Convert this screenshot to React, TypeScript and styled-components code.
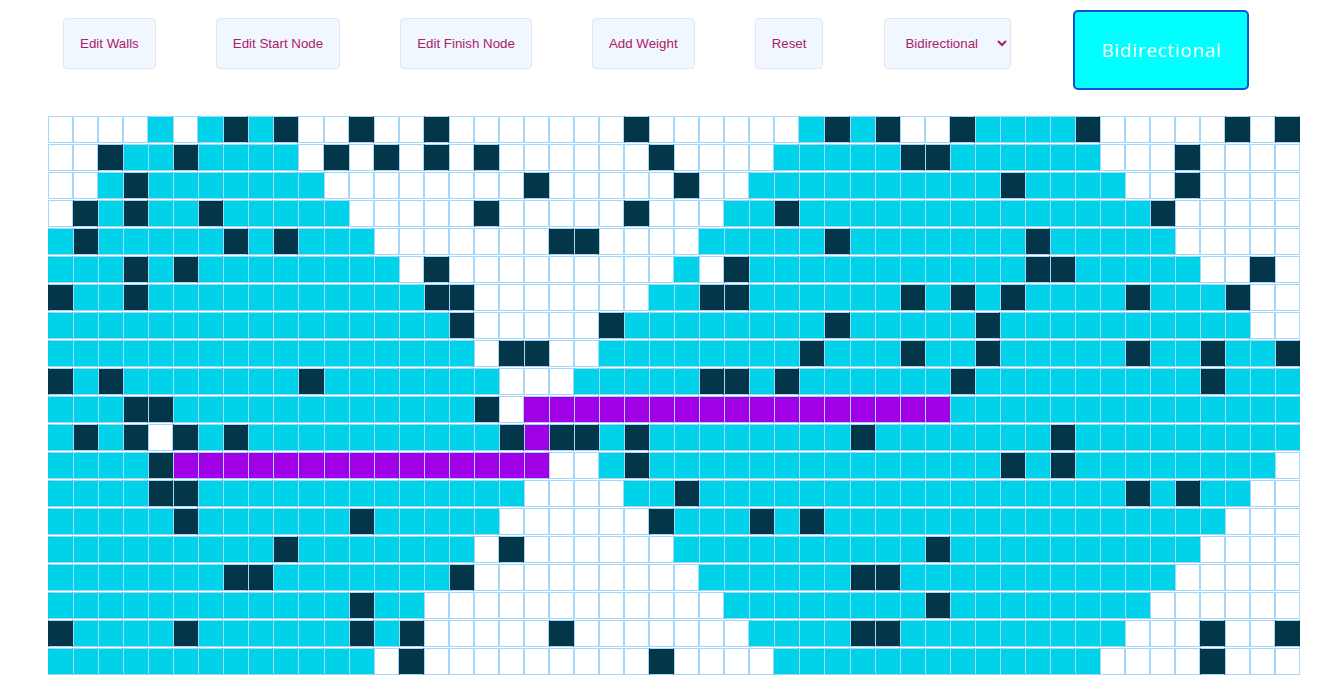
import styled, { createGlobalStyle } from 'styled-components'

const GlobalStyle = createGlobalStyle`
  html, body {
    margin: 0;
    padding: 0;
    background: #fff;
    font-family: "Liberation Sans", Arial, sans-serif;
  }
`

const Toolbar = styled.div`
  display: flex;
  align-items: flex-start;
  gap: 60px;
  padding: 10px 0 0 63px;
  height: 116px;
  box-sizing: border-box;
`

const ToolButton = styled.button`
  height: 51px;
  margin-top: 8px;
  padding: 0 16px;
  background: #f0f7ff;
  border: 1px solid #dfe6ed;
  border-radius: 4px;
  color: #ab2168;
  font-family: "Liberation Sans", Arial, sans-serif;
  font-size: 13.333px;
`

const AlgoSelect = styled.select`
  width: 127px;
  height: 51px;
  margin: 8px 2px 0 1px;
  padding: 0 0 0 16px;
  background: #f0f7ff;
  border: 1px solid #dfe6ed;
  border-radius: 4px;
  color: #ab2168;
  font-family: "Liberation Sans", Arial, sans-serif;
  font-size: 13.333px;
`

const VisualizeButton = styled.button`
  width: 176px;
  height: 80px;
  padding: 0;
  background: #00ffff;
  border: 2px solid #0b50d6;
  border-radius: 5px;
  color: #fff;
  font-family: "Open Sans", sans-serif;
  font-size: 19px;
  letter-spacing: 0.7px;
`

const Board = styled.div`
  width: 1252px;
  margin-left: 48px;
  display: flex;
  flex-direction: column;
  gap: 1px;
`

const BoardRow = styled.div`
  display: flex;
  height: 27px;
`

type CellKind = 'w' | 'c' | 'd' | 'p'

const cellColors: Record<CellKind, string> = {
  w: '#ffffff',
  c: '#00d2ea',
  d: '#023648',
  p: '#a000e6',
}

const lineColor = '#a3d7fb'

// filled cells run under their side borders, so only white next to white shows a double line
const Cell = styled.div<{ $kind: CellKind; $joined: boolean }>`
  flex: 1;
  box-sizing: border-box;
  border: 1px solid ${lineColor};
  border-left-color: ${(p) => (p.$kind === 'w' || p.$joined ? lineColor : 'transparent')};
  border-right-color: ${(p) => (p.$kind === 'w' ? lineColor : 'transparent')};
  background: ${(p) => cellColors[p.$kind]};
  background-clip: border-box;
`

// w = empty, c = visited, d = wall, p = path
const rows = [
  'wwwwcwcdcdwwdwwdw wwwwwwdwwwwwwcdcd wwdccccdwwwwwdwd',
  'wwdccdccccwdwdwdw dwwwwwwdwwwwccccc ddccccccwwwdwwww',
  'wwcdcccccccwwwwww wwdwwwwwdwwcccccc ccccdccccwwdwwww',
  'wdcdccdcccccwwwww dwwwwwdwwwccdcccc ccccccccccdwwwww',
  'cdcccccdcdcccwwww wwwddwwwwcccccdcc cccccdcccccwwwww',
  'cccdcdccccccccwdw wwwwwwwwcwdcccccc cccccddcccccwwdw',
  'dccdcccccccccccdd wwwwwwwccddcccccc dcdcdccccdcccdww',
  'ccccccccccccccccd wwwwwdccccccccdcc cccdccccccccccww',
  'ccccccccccccccccc wddwwccccccccdccc dccdcccccdccdccd',
  'dcdcccccccdcccccc cwwwcccccddcdcccc ccdcccccccccdccc',
  'cccddcccccccccccc dwppppppppppppppp ppcccccccccccccc',
  'cdcdwdcdccccccccc cdpddcdccccccccdc ccccccdccccccccc',
  'ccccdpppppppppppp pppwwcdcccccccccc ccccdcdccccccccw',
  'ccccddccccccccccc ccwwwwccdcccccccc cccccccccdcdccww',
  'cccccdccccccdcccc cwwwwwwdcccdcdccc cccccccccccccwww',
  'cccccccccdccccccc wdwwwwwwccccccccc cdccccccccccwwww',
  'cccccccddcccccccd wwwwwwwwwccccccdd cccccccccccwwwww',
  'ccccccccccccdccww wwwwwwwwwwccccccc cdccccccccwwwwww',
  'dccccdccccccdcdww wwwdwwwwwwwccccdd cccccccccwwwdwwd',
  'cccccccccccccwdww wwwwwwwdwwwwccccc ccccccccwwwwdwww',
].map((r) => r.replace(/ /g, '').split('') as CellKind[])

export default function App() {
  return (
    <>
      <GlobalStyle />
      <Toolbar>
        <ToolButton>Edit Walls</ToolButton>
        <ToolButton>Edit Start Node</ToolButton>
        <ToolButton>Edit Finish Node</ToolButton>
        <ToolButton>Add Weight</ToolButton>
        <ToolButton>Reset</ToolButton>
        <AlgoSelect defaultValue="Bidirectional">
          <option>Bidirectional</option>
          <option>Dijkstra</option>
          <option>A*</option>
        </AlgoSelect>
        <VisualizeButton>Bidirectional</VisualizeButton>
      </Toolbar>
      <Board>
        {rows.map((row, i) => (
          <BoardRow key={i}>
            {row.map((kind, j) => (
              <Cell key={j} $kind={kind} $joined={j > 0 && row[j - 1] !== 'w'} />
            ))}
          </BoardRow>
        ))}
      </Board>
    </>
  )
}
